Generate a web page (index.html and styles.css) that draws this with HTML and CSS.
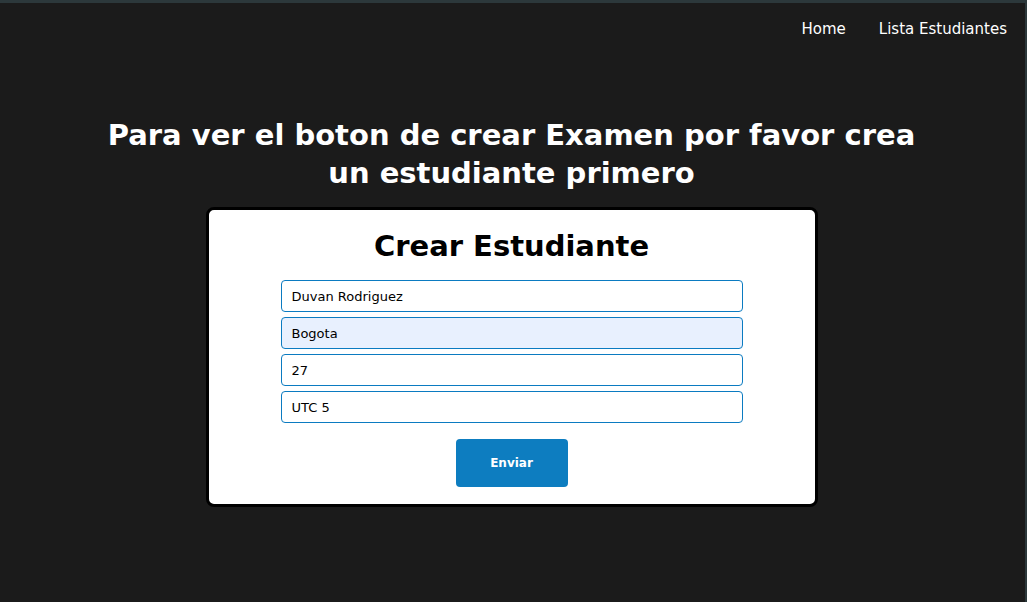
FILE: index.html
```html
<!DOCTYPE html>
<html lang="es">
<head>
<meta charset="utf-8">
<title>Crear Estudiante</title>
<link rel="stylesheet" href="styles.css">
</head>
<body>
<div class="frame">
  <nav class="nav">
    <a href="#" class="nav-link">Home</a>
    <a href="#" class="nav-link">Lista Estudiantes</a>
  </nav>
  <main class="main">
    <h1 class="notice">Para ver el boton de crear Examen por favor crea un estudiante primero</h1>
    <form class="card">
      <h2 class="card-title">Crear Estudiante</h2>
      <div class="fields">
        <input class="field" type="text" value="Duvan Rodriguez">
        <input class="field field-filled" type="text" value="Bogota">
        <input class="field" type="text" value="27">
        <input class="field" type="text" value="UTC 5">
      </div>
      <button type="button" class="btn">Enviar</button>
    </form>
  </main>
</div>
</body>
</html>
```

FILE: styles.css
```css
html, body {
  margin: 0;
  padding: 0;
  height: 100%;
}
body {
  background: #1b1b1b;
  font-family: "DejaVu Sans", sans-serif;
  color: #fff;
}
.frame {
  box-sizing: border-box;
  height: 602px;
  border-top: 3px solid #2c383b;
  border-right: 2px solid #2c383b;
  overflow: hidden;
}
.nav {
  display: flex;
  justify-content: flex-end;
  gap: 33px;
  padding: 16px 18px 0 0;
  height: 29px;
}
.nav-link {
  color: #fff;
  text-decoration: none;
  font-size: 15px;
  line-height: 20px;
}
.main {
  display: flex;
  flex-direction: column;
  align-items: center;
  padding-right: 2px;
}
.notice {
  margin: 68px 0 0;
  width: 840px;
  text-align: center;
  font-size: 29px;
  line-height: 38px;
  font-weight: bold;
}
.card {
  box-sizing: border-box;
  width: 612px;
  margin-top: 15px;
  background: #fff;
  border: 3px solid #000;
  border-radius: 8px;
  display: flex;
  flex-direction: column;
  align-items: center;
  padding: 16px 0 17px;
}
.card-title {
  margin: 0;
  color: #000;
  font-size: 29px;
  line-height: 40px;
  font-weight: bold;
}
.fields {
  display: flex;
  flex-direction: column;
  gap: 5px;
  margin-top: 14px;
}
.field {
  box-sizing: border-box;
  width: 462px;
  height: 32px;
  border: 1px solid #0b7bc1;
  border-radius: 4px;
  padding: 0 10px;
  font-family: "DejaVu Sans", sans-serif;
  font-size: 13px;
  color: #000;
  background: #fff;
}
.field-filled {
  background: #e8f0fe;
}
.btn {
  margin-top: 16px;
  width: 112px;
  height: 48px;
  border: none;
  border-radius: 4px;
  background: #0d7dc0;
  color: #fff;
  font-family: "DejaVu Sans", sans-serif;
  font-size: 12px;
  font-weight: bold;
}
```
